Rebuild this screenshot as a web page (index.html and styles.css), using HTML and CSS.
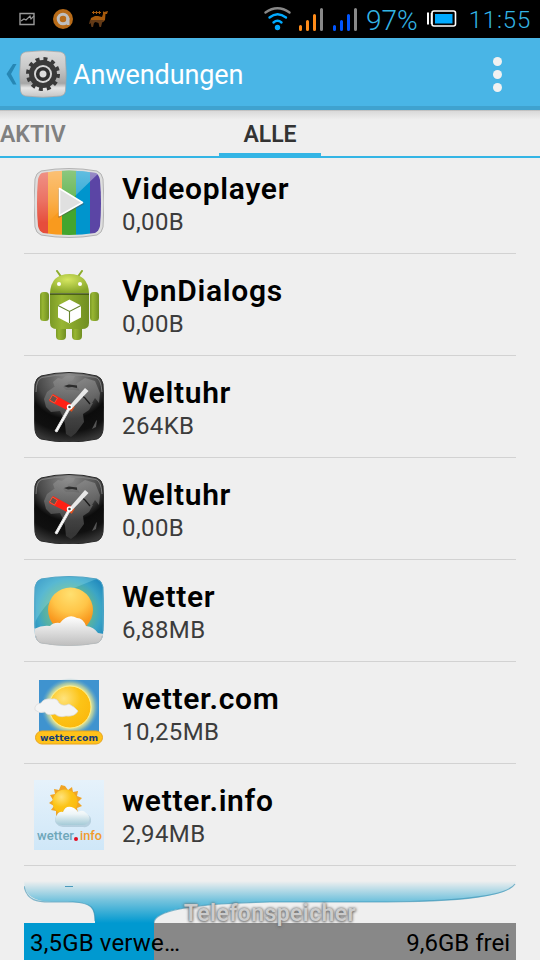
FILE: index.html
```html
<!DOCTYPE html>
<html lang="de">
<head>
    <meta charset="utf-8">
    <title>Anwendungen</title>
    <link rel="stylesheet" href="styles.css">
</head>
<body>
    <svg class="defs" width="0" height="0">
        <defs>
            <linearGradient id="silver" x1="0" y1="0" x2="0" y2="1">
                <stop offset="0" stop-color="#dcdcdc"/>
                <stop offset=".35" stop-color="#c9c9c9"/>
                <stop offset=".7" stop-color="#a6a6a6"/>
                <stop offset=".8" stop-color="#e6e6e6"/>
                <stop offset="1" stop-color="#c4c4c4"/>
            </linearGradient>
            <linearGradient id="green" x1="0" y1="0" x2="1" y2="0">
                <stop offset="0" stop-color="#7b9a26"/>
                <stop offset=".3" stop-color="#98b632"/>
                <stop offset="1" stop-color="#708e22"/>
            </linearGradient>
            <radialGradient id="head" cx=".45" cy=".3" r=".7">
                <stop offset="0" stop-color="#d5e660"/>
                <stop offset="1" stop-color="#86a528"/>
            </radialGradient>
            <linearGradient id="shine" x1="0" y1="0" x2="0" y2="1">
                <stop offset="0" stop-color="#fff" stop-opacity=".4"/>
                <stop offset=".6" stop-color="#fff" stop-opacity=".2"/>
                <stop offset="1" stop-color="#fff" stop-opacity="0"/>
            </linearGradient>
            <radialGradient id="night" cx=".5" cy=".05" r="1">
                <stop offset="0" stop-color="#8e8e8e"/>
                <stop offset=".45" stop-color="#484848"/>
                <stop offset=".62" stop-color="#0c0c0c"/>
                <stop offset=".8" stop-color="#101010"/>
                <stop offset="1" stop-color="#404040"/>
            </radialGradient>
            <linearGradient id="land" x1="0" y1="0" x2="0" y2="1">
                <stop offset="0" stop-color="#8f8f8f"/>
                <stop offset=".5" stop-color="#626262"/>
                <stop offset="1" stop-color="#3c3c3c"/>
            </linearGradient>
            <radialGradient id="sky" cx=".5" cy=".5" r=".65">
                <stop offset="0" stop-color="#9ac695"/>
                <stop offset=".55" stop-color="#54b0a5"/>
                <stop offset=".7" stop-color="#3ba5c6"/>
                <stop offset="1" stop-color="#1981bb"/>
            </radialGradient>
            <radialGradient id="sun" cx=".5" cy=".15" r=".9">
                <stop offset="0" stop-color="#ffe070"/>
                <stop offset=".45" stop-color="#ffc548"/>
                <stop offset=".75" stop-color="#f99a20"/>
                <stop offset="1" stop-color="#f58a10"/>
            </radialGradient>
            <linearGradient id="cloud" x1="0" y1="0" x2="0" y2="1">
                <stop offset="0" stop-color="#fff"/>
                <stop offset="1" stop-color="#bdbdbd"/>
            </linearGradient>
            <radialGradient id="glow">
                <stop offset=".68" stop-color="#fff59a"/>
                <stop offset=".82" stop-color="#c2d59c" stop-opacity=".75"/>
                <stop offset="1" stop-color="#5fa9d0" stop-opacity="0"/>
            </radialGradient>
            <radialGradient id="ball" cx=".35" cy=".3" r=".8">
                <stop offset="0" stop-color="#ffe37d"/>
                <stop offset=".5" stop-color="#fcc417"/>
                <stop offset="1" stop-color="#fbb70c"/>
            </radialGradient>
            <linearGradient id="pale" x1="0" y1="0" x2="0" y2="1">
                <stop offset="0" stop-color="#e6f2fb"/>
                <stop offset="1" stop-color="#cfe7f8"/>
            </linearGradient>
            <linearGradient id="softcloud" x1="0" y1="0" x2="0" y2="1">
                <stop offset="0" stop-color="#fff"/>
                <stop offset=".4" stop-color="#eef5f7"/>
                <stop offset="1" stop-color="#a5cbd8"/>
            </linearGradient>
            <linearGradient id="pour" x1="0" y1="0" x2="0" y2="1">
                <stop offset="0" stop-color="#0099cc" stop-opacity="0"/>
                <stop offset=".45" stop-color="#0099cc" stop-opacity=".5"/>
                <stop offset="1" stop-color="#0099d0"/>
            </linearGradient>
            <symbol id="worldclock" viewBox="0 0 70 70">
                <path d="M7 4Q35-3 63 4Q68 6 69 12Q71 35 69 58Q68 65 63 67Q35 73 7 67Q2 65 1 58Q-1 35 1 12Q2 6 7 4Z" fill="url(#night)" stroke="#292929"/>
                <path d="M2 20Q2 7 8 5.500Q35 0 62 5.500Q67 7 68 20" fill="none" stroke="#8a8a8a" stroke-width=".8"/>
                <path d="M19 10l5-4 4 1 4-3h9l-2 4-5 2-1 3-5 2-7 1zM13 20l7-5 8-1 4 4 8 0 8 1 5 11 6 1-4 7-6 4 1 8-8 11-5 4-5-3-1-10-2-7-3-6-9 1-5-5-2-8zM42 12l9-6 10 3 5 12-1 10-4-5-3 5-5 2-5-10z" fill="url(#land)" opacity=".75"/>
                <path d="M60 53l2-4 1-1-1 7-4 2z" fill="#555"/>
                <path d="M30 14l5-1.500 8 1v2.500l-5-1-4 .5z" fill="#2c2c2c"/>
                <path d="M47 23l4 3 5 6" fill="none" stroke="#1a1a1a" stroke-width="1.300"/>
                <path d="M19 22l20 11-4 6-20-10z" fill="#ff2015"/>
                <path d="M18.500 23l5 3-3 5-5-3z" fill="#6a5148" stroke="#ff5132"/>
                <path d="M39.500 34l-3 5" stroke="#e0501f" stroke-width="3"/>
                <path d="M51 16l3.500 3-17 18-3-2z" fill="#e8e8e8"/>
                <path d="M34 36l2 1-13 23-2-1z" fill="#fff" stroke="#ddd"/>
                <circle cx="35.500" cy="35" r="2" fill="#444" stroke="#fff" stroke-width="1.400"/>
            </symbol>
        </defs>
    </svg>

    <div class="statusbar">
        <svg class="notifications" width="92" height="38" viewBox="18 0 92 38">
            <path d="M20 13.500H34V24.500H20Z" fill="none" stroke="#999" stroke-width="1.400"/>
            <path d="M21 21l3-2 2 1 4-4 1 3 3-3" fill="none" stroke="#999" stroke-width="1.200"/>
            <circle cx="63" cy="19" r="10" fill="#b86b18"/>
            <circle cx="63" cy="19" r="4.800" fill="none" stroke="#bfbfbf" stroke-width="3"/>
            <path d="M68 18v7" stroke="#bfbfbf" stroke-width="3"/>
            <path d="M103 11l1 1 4-1-1 3h-1.500l-.5 6-2 2H90l1-4 4-2h3l4 1 1-3z" fill="#a75a0c"/>
            <path d="M90 20h14l-2 3-1 4h-1.500l-1-4-3-1-1.500 1-1 4h-1.500l-1-4-1 1h-.5z" fill="#623a17"/>
            <path d="M92 12.500h9M93.500 11v3M96.500 11v3M99.500 11v3" stroke="#a75a0c"/>
        </svg>
        <div class="indicators">
            <svg width="94" height="38" viewBox="264 0 94 38">
                <g fill="none" stroke-width="2.400" stroke-linecap="round">
                    <path d="M265.500 12.500Q277.500 4 289.500 12.500" stroke="#888"/>
                    <path d="M269.500 17.500Q277.500 11 286 17.500" stroke="#00aaff"/>
                    <path d="M273.500 22.500Q277.500 19 281.500 22.500" stroke="#00aaff"/>
                </g>
                <circle cx="277.500" cy="27.500" r="2.700" fill="#00aaff"/>
                <g stroke-width="3" stroke-linecap="round">
                    <path d="M300.500 26.500v3M307.500 21.500v8M314.500 15.500v14" stroke="#ff8c1a"/>
                    <path d="M321.500 9.500v20M355.500 9.500v20" stroke="#888"/>
                    <path d="M334.500 26.500v3M341.500 21.500v8M348.500 15.500v14" stroke="#0055ff"/>
                </g>
            </svg>
            <span class="percent">97%</span>
            <svg class="battery" width="30" height="38" viewBox="427 0 30 38">
                <path d="M428 12.500v12" stroke="#fff" stroke-width="2"/>
                <rect x="432" y="11" width="23.500" height="15" rx="2" fill="none" stroke="#fff" stroke-width="1.600"/>
                <path d="M431.500 13v11" stroke="#fff" stroke-width="1.500"/>
                <rect x="435" y="14" width="17.500" height="9.500" fill="#00aaff"/>
            </svg>
            <span class="clock">11:55</span>
        </div>
    </div>

    <div class="actionbar">
        <svg width="67" height="68" viewBox="0 38 67 68">
            <path d="M16.500 64H13L6.500 74L13 84.500H16.500L11 74Z" fill="#2787b4"/>
            <path d="M25 52Q43 49.500 61 52Q65 53 65.500 57Q67 74 65.500 91Q65 95 61 96Q43 98.500 25 96Q21 95 20.500 91Q19 74 20.500 57Q21 53 25 52Z" fill="url(#silver)" stroke="#a3a3a3" stroke-width=".7"/>
            <circle cx="43" cy="74" r="15" fill="none" stroke="#393939" stroke-width="4" stroke-dasharray="3.900 3.954"/>
            <circle cx="43" cy="74" r="11" fill="none" stroke="#393939" stroke-width="6"/>
            <circle cx="43" cy="74" r="9" fill="#d6d6d6"/>
            <circle cx="43" cy="74" r="5.300" fill="#ddd" stroke="#303030" stroke-width="3.600"/>
        </svg>
        <h1>Anwendungen</h1>
        <div class="menu"><i></i><i></i><i></i></div>
    </div>

    <div class="tabs">
        <div class="tab tab-left">AKTIV</div>
        <div class="tab active">ALLE</div>
    </div>

    <div class="list">
        <div class="row">
            <svg class="icon" viewBox="0 0 70 70">
                <clipPath id="vclip"><path d="M8 5Q35 0 62 5Q65 7 66 12Q68 35 66 58Q65 63 61 65Q35 69 9 65Q5 63 4 58Q2 35 4 12Q5 7 8 5Z"/></clipPath>
                <path d="M7 3Q35-2 63 3Q68 5 69 11Q71 35 69 59Q68 65 63 67Q35 72 7 67Q2 65 1 59Q-1 35 1 11Q2 5 7 3Z" fill="#dedede" stroke="#b3b3b3"/>
                <g clip-path="url(#vclip)">
                    <path d="M0 0h14v70H0z" fill="#e64e3c"/>
                    <path d="M14 0h14v70H14z" fill="#f99a1e"/>
                    <path d="M28 0h14v70H28z" fill="#43a52e"/>
                    <path d="M42 0h14v70H42z" fill="#0095cd"/>
                    <path d="M56 0h14v70H56z" fill="#5b45a5"/>
                    <path d="M0 0h70L14 54L0 55z" fill="url(#shine)"/>
                </g>
                <path d="M24.500 21v29l26-14z" fill="#555" opacity=".5"/>
                <path d="M25.500 20.500v27l23-13z" fill="#e0e0e0" stroke="#fff" stroke-width="1.500" stroke-linejoin="round"/>
            </svg>
            <div class="info">
                <div class="name">Videoplayer</div>
                <div class="size">0,00B</div>
            </div>
        </div>
        <div class="row">
            <svg class="icon" viewBox="0 0 70 70">
                <path d="M23 1l5 7M48 1l-5 7" stroke="#8dac2b" stroke-width="2" stroke-linecap="round"/>
                <path d="M16 23Q17 4 35.500 4T55 23z" fill="url(#head)"/>
                <rect x="6" y="22" width="9" height="29" rx="3.500" fill="url(#green)"/>
                <rect x="56" y="22" width="9" height="29" rx="3.500" fill="url(#green)"/>
                <rect x="22" y="51" width="10" height="19" rx="4" fill="url(#green)"/>
                <rect x="38" y="51" width="10" height="19" rx="4" fill="url(#green)"/>
                <path d="M16 24H55V53Q55 59 48 59H23Q16 59 16 53Z" fill="url(#green)"/>
                <path d="M16 24H55" stroke="#394c0d" stroke-width="1.500"/>
                <circle cx="25" cy="14" r="2" fill="#fff"/>
                <circle cx="46" cy="14" r="2" fill="#fff"/>
                <path d="M35.500 29.500L47 35.500V47.500L35.500 53.500L24 47.500V35.500Z" fill="#fff"/>
                <path d="M24 35.500L35.500 41.500L47 35.500M35.500 41.500V53" stroke="#65842b" stroke-width="1.100" fill="none"/>
            </svg>
            <div class="info">
                <div class="name">VpnDialogs</div>
                <div class="size">0,00B</div>
            </div>
        </div>
        <div class="row">
            <svg class="icon"><use href="#worldclock"/></svg>
            <div class="info">
                <div class="name">Weltuhr</div>
                <div class="size">264KB</div>
            </div>
        </div>
        <div class="row">
            <svg class="icon"><use href="#worldclock"/></svg>
            <div class="info">
                <div class="name">Weltuhr</div>
                <div class="size">0,00B</div>
            </div>
        </div>
        <div class="row">
            <svg class="icon" viewBox="0 0 70 70">
                <clipPath id="wclip"><path d="M7 3Q35-2 63 3Q68 5 69 11Q71 35 69 59Q68 65 63 67Q35 72 7 67Q2 65 1 59Q-1 35 1 11Q2 5 7 3Z"/></clipPath>
                <g clip-path="url(#wclip)">
                    <path d="M0 0h70v70H0z" fill="url(#sky)"/>
                    <path d="M0 0h70L30 16Q12 24 0 48z" fill="#9de6f2" opacity=".3"/>
                    <circle cx="36.500" cy="34" r="22.500" fill="url(#sun)"/>
                    <path d="M0 53Q8 49 16 50Q20 46 26 47Q34 37 43 42Q49 42 52 50Q60 51 64 57L70 58V70H0Z" fill="url(#cloud)"/>
                </g>
                <path d="M1 52V11Q2 5 7 3Q35-2 63 3Q68 5 69 11V55" fill="none" stroke="#52a5c5"/>
                <path d="M2 60Q3 66 7 67Q35 72 63 67Q67 66 68 60" fill="none" stroke="#bcbcbc"/>
            </svg>
            <div class="info">
                <div class="name">Wetter</div>
                <div class="size">6,88MB</div>
            </div>
        </div>
        <div class="row">
            <svg class="icon" viewBox="0 0 70 70">
                <path d="M5 2h60v52H5z" fill="#3f93cf"/>
                <circle cx="36" cy="29" r="29" fill="url(#glow)"/>
                <circle cx="36" cy="29" r="21" fill="url(#ball)" stroke="#fff089"/>
                <path d="M1 32Q0 26 7 25Q10 20 18 21Q23 20 25 25Q29 29 35 26Q41 29 44 33Q41 39 32 38Q25 40 21 36Q13 38 11 34Q5 36 1 32Z" fill="#f4f4f4" stroke="#d8d8d8" stroke-width=".7"/>
                <rect x="1.500" y="53" width="67" height="13" rx="6.500" fill="#ffc21a" stroke="#e9a51f"/>
                <text class="com-logo" x="35" y="62.500" text-anchor="middle" textLength="58" lengthAdjust="spacingAndGlyphs">wetter.com</text>
            </svg>
            <div class="info">
                <div class="name">wetter.com</div>
                <div class="size">10,25MB</div>
            </div>
        </div>
        <div class="row">
            <svg class="icon" viewBox="0 0 70 70">
                <path d="M0 0h70v70H0z" fill="url(#pale)"/>
                <path d="M31 6l3 4 4-3 1 5 5-1-1 5 5 2-4 4 4 4-5 2 1 5-5-1-2 5-4-3-4 4-2-5-5 3v-5l-5-1 3-4-5-3 4-3-3-5 5-1-1-5 5 1 2-5z" fill="#f0a526"/>
                <circle cx="31" cy="22" r="12.500" fill="url(#ball)"/>
                <path d="M25 46Q19 42 22 36Q23 32 28 33Q32 25 39 29Q43 30 44 33Q49 29 52 34Q58 36 57 42Q55 48 49 47H29Z" fill="#8dafbf" opacity=".45"/>
                <path d="M24 44Q19 40 23 35Q25 31 29 32Q32 24 40 28Q43 30 44 32Q49 29 52 33Q57 36 55 41Q53 45 48 45H28Z" fill="url(#softcloud)"/>
                <text class="info-logo" x="3" y="59.500" textLength="37" lengthAdjust="spacingAndGlyphs">wetter</text>
                <circle cx="42" cy="59" r="2" fill="#e30b20"/>
                <text class="info-logo orange" x="46" y="59.500" textLength="22" lengthAdjust="spacingAndGlyphs">info</text>
            </svg>
            <div class="info">
                <div class="name">wetter.info</div>
                <div class="size">2,94MB</div>
            </div>
        </div>
    </div>

    <div class="storage">
        <svg width="492" height="42" viewBox="24 881 492 42">
            <path d="M24 881H516C514 896 470 902 370 902H270C215 903 154 907 154 923H95C95 908 92 903 73 902C50 901 25 906 24 881Z" fill="url(#pour)"/>
            <path d="M24 886C27 901 38 902 50 902H73C92 903 95 908 95 921" fill="none" stroke="#338eb1" stroke-width="1.200" opacity=".6"/>
            <path d="M515 884C508 895 470 902 370 902H270C215 903 154 907 154 923" fill="none" stroke="#338eb1" stroke-width="1.200" opacity=".6"/>
            <path d="M65 886.500h8" stroke="#4b9abc"/>
        </svg>
        <div class="storage-title">Telefonspeicher</div>
        <div class="storage-bar">
            <span class="used">3,5GB verwe…</span>
            <span class="free">9,6GB frei</span>
        </div>
    </div>
</body>
</html>
```

FILE: styles.css
```css
* {
    box-sizing: border-box;
}
body {
    margin: 0;
    width: 540px;
    height: 960px;
    overflow: hidden;
    display: flex;
    flex-direction: column;
    background-color: #efefef;
    font-family: Roboto, sans-serif;
}
svg {
    display: block;
    flex-shrink: 0;
}
.defs {
    position: absolute;
}
.statusbar {
    height: 38px;
    flex-shrink: 0;
    padding: 0 9px 0 18px;
    display: flex;
    justify-content: space-between;
    background-color: #000;
    color: #33b5e5;
}
.indicators {
    display: flex;
    line-height: 40px;
    white-space: nowrap;
}
.percent {
    width: 69px;
    padding-left: 8px;
    font-size: 28px;
    line-height: 41px;
    font-weight: 300;
}
.clock {
    width: 74px;
    text-align: right;
    font-size: 24px;
    font-weight: 300;
    letter-spacing: 0.8px;
}
.actionbar {
    height: 72px;
    flex-shrink: 0;
    display: flex;
    background-color: #49b5e6;
    border-bottom: 4px solid #3fa2cf;
    color: #fff;
}
.actionbar h1 {
    margin: 0 0 0 6px;
    font-size: 27px;
    line-height: 74px;
    font-weight: 400;
    letter-spacing: -0.1px;
}
.menu {
    margin: 19px 38px 0 auto;
    display: flex;
    flex-direction: column;
    gap: 4px;
}
.menu i {
    width: 9px;
    height: 9px;
    border-radius: 50%;
    background-color: #f1f1f1;
}
.tabs {
    height: 48px;
    flex-shrink: 0;
    display: flex;
    border-bottom: 2px solid #33b5e5;
    background: linear-gradient(#aaa 0, #d9d9d9 1px, #efefef 10px);
    font-size: 23px;
    font-weight: 600;
    line-height: 49px;
}
.tab-left {
    width: 219px;
    color: #808080;
}
.active {
    width: 102px;
    height: 48px;
    border-bottom: 5px solid #33b5e5;
    text-align: center;
    color: #333;
}
.list {
    height: 708px;
    flex-shrink: 0;
    overflow: hidden;
    padding: 0 24px;
}
.row {
    height: 102px;
    padding-left: 10px;
    display: flex;
    align-items: center;
    border-bottom: 1px solid #d2d2d2;
}
.row:first-child {
    margin-top: -6px;
}
.icon {
    width: 70px;
    height: 70px;
}
.info {
    margin-left: 18px;
    padding-top: 2px;
}
.name {
    font-size: 30px;
    line-height: 36px;
    font-weight: 600;
    letter-spacing: 0.7px;
    color: #000;
}
.size {
    font-size: 24px;
    line-height: 30px;
    letter-spacing: 0.4px;
    color: #3c3c3c;
}
.com-logo {
    font: 900 9px "DejaVu Sans", sans-serif;
    fill: #153d76;
}
.info-logo {
    font: 500 13px Roboto, sans-serif;
    fill: #6fa7b9;
}
.orange {
    fill: #f29b2c;
}
.storage {
    position: relative;
    height: 94px;
    flex-shrink: 0;
    padding: 15px 24px 0;
}
/* sits over the poured shape and the top edge of the bar */
.storage-title {
    position: absolute;
    left: 0;
    right: 0;
    top: 34px;
    text-align: center;
    font-size: 23px;
    line-height: 28px;
    font-weight: 600;
    letter-spacing: 0.4px;
    color: #ccc;
    text-shadow: 0 0 3px #666, 0 1px 3px #777;
    z-index: 1;
}
.storage-bar {
    height: 37px;
    padding: 0 6px;
    display: flex;
    justify-content: space-between;
    background: linear-gradient(90deg, #0099d0 130px, #888 130px);
    font-size: 24px;
    line-height: 40px;
    color: #000;
}
.used {
    letter-spacing: 0.15px;
}
```
